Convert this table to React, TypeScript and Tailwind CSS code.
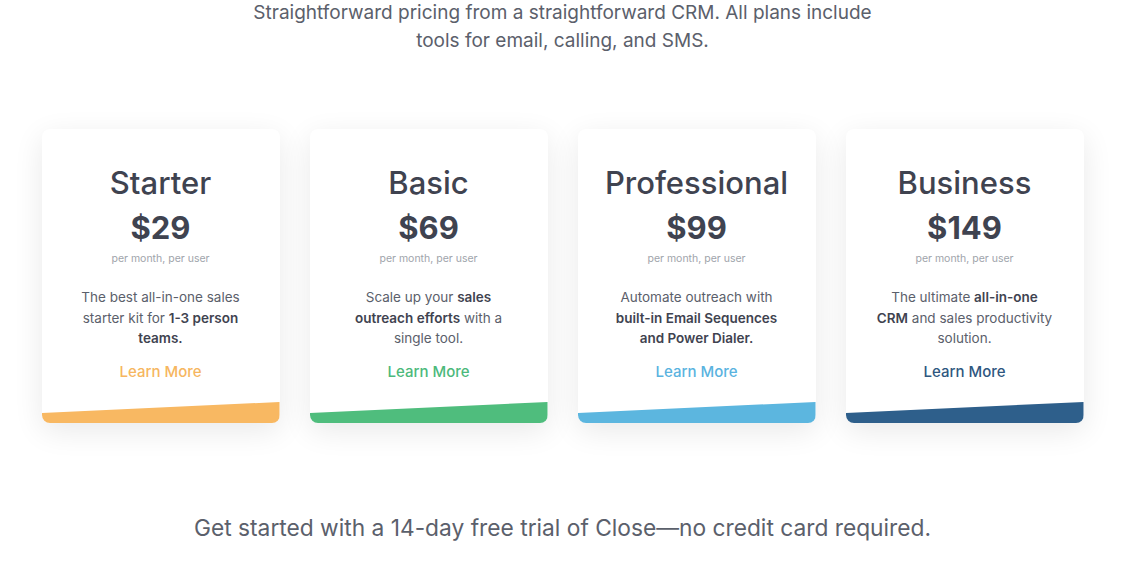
const plans = [
  {
    name: 'Starter',
    price: '$29',
    color: 'text-[#f6b660]',
    band: 'bg-[#f8b862]',
    desc: (
      <>
        The best all-in-one sales starter kit for <b className="font-semibold text-[#3f4350]">1-3 person teams.</b>
      </>
    ),
  },
  {
    name: 'Basic',
    price: '$69',
    color: 'text-[#4cb97b]',
    band: 'bg-[#4fbd7d]',
    desc: (
      <>
        Scale up your <b className="font-semibold text-[#3f4350]">sales outreach efforts</b> with a single tool.
      </>
    ),
  },
  {
    name: 'Professional',
    price: '$99',
    color: 'text-[#5ab3df]',
    band: 'bg-[#5cb6df]',
    desc: (
      <>
        Automate outreach with <b className="font-semibold text-[#3f4350]">built-in Email Sequences and Power Dialer.</b>
      </>
    ),
  },
  {
    name: 'Business',
    price: '$149',
    color: 'text-[#2f5780]',
    band: 'bg-[#2e5f8b]',
    desc: (
      <>
        The ultimate <b className="font-semibold text-[#3f4350]">all-in-one CRM</b> and sales productivity solution.
      </>
    ),
  },
];

export default function App() {
  return (
    <div className="min-h-[568px] bg-white pr-[15px] font-['Inter',sans-serif]">
      {/* Intro */}
      <p className="mx-auto -mt-px w-[640px] text-center text-[19px] leading-[28px] text-[#5b606b]">
        Straightforward pricing from a straightforward CRM. All plans include tools for email, calling, and SMS.
      </p>

      {/* Plan cards */}
      <div className="mt-[74px] flex justify-center gap-[30px]">
        {plans.map(plan => (
          <div
            key={plan.name}
            className="flex h-[294px] w-[238px] flex-col overflow-hidden rounded-lg bg-white text-center shadow-[0_8px_30px_rgba(0,0,0,0.09)]"
          >
            <h2 className="pt-[36px] text-[31px] font-medium leading-[36px] text-[#3f4350]">{plan.name}</h2>
            <div className="mt-[9px] text-[31px] font-bold leading-[36px] text-[#3f4350]">{plan.price}</div>
            <div className="mt-[6px] text-[10.5px] leading-[14px] text-[#a0a4ab]">per month, per user</div>
            <p className="mx-auto mt-[21px] w-[180px] text-[13.5px] leading-[20.5px] text-[#5b606b]">{plan.desc}</p>
            <a className={`mt-[13px] text-[15px] font-medium leading-[20px] ${plan.color}`}>Learn More</a>
            <div className="flex-1" />
            <div className={`h-[21px] [clip-path:polygon(0_52%,100%_0,100%_100%,0_100%)] ${plan.band}`} />
          </div>
        ))}
      </div>

      {/* Trial note */}
      <p className="mt-[90px] text-center text-[22.75px] leading-[30px] text-[#5b606b]">
        Get started with a 14-day free trial of Close—no credit card required.
      </p>
    </div>
  );
}
